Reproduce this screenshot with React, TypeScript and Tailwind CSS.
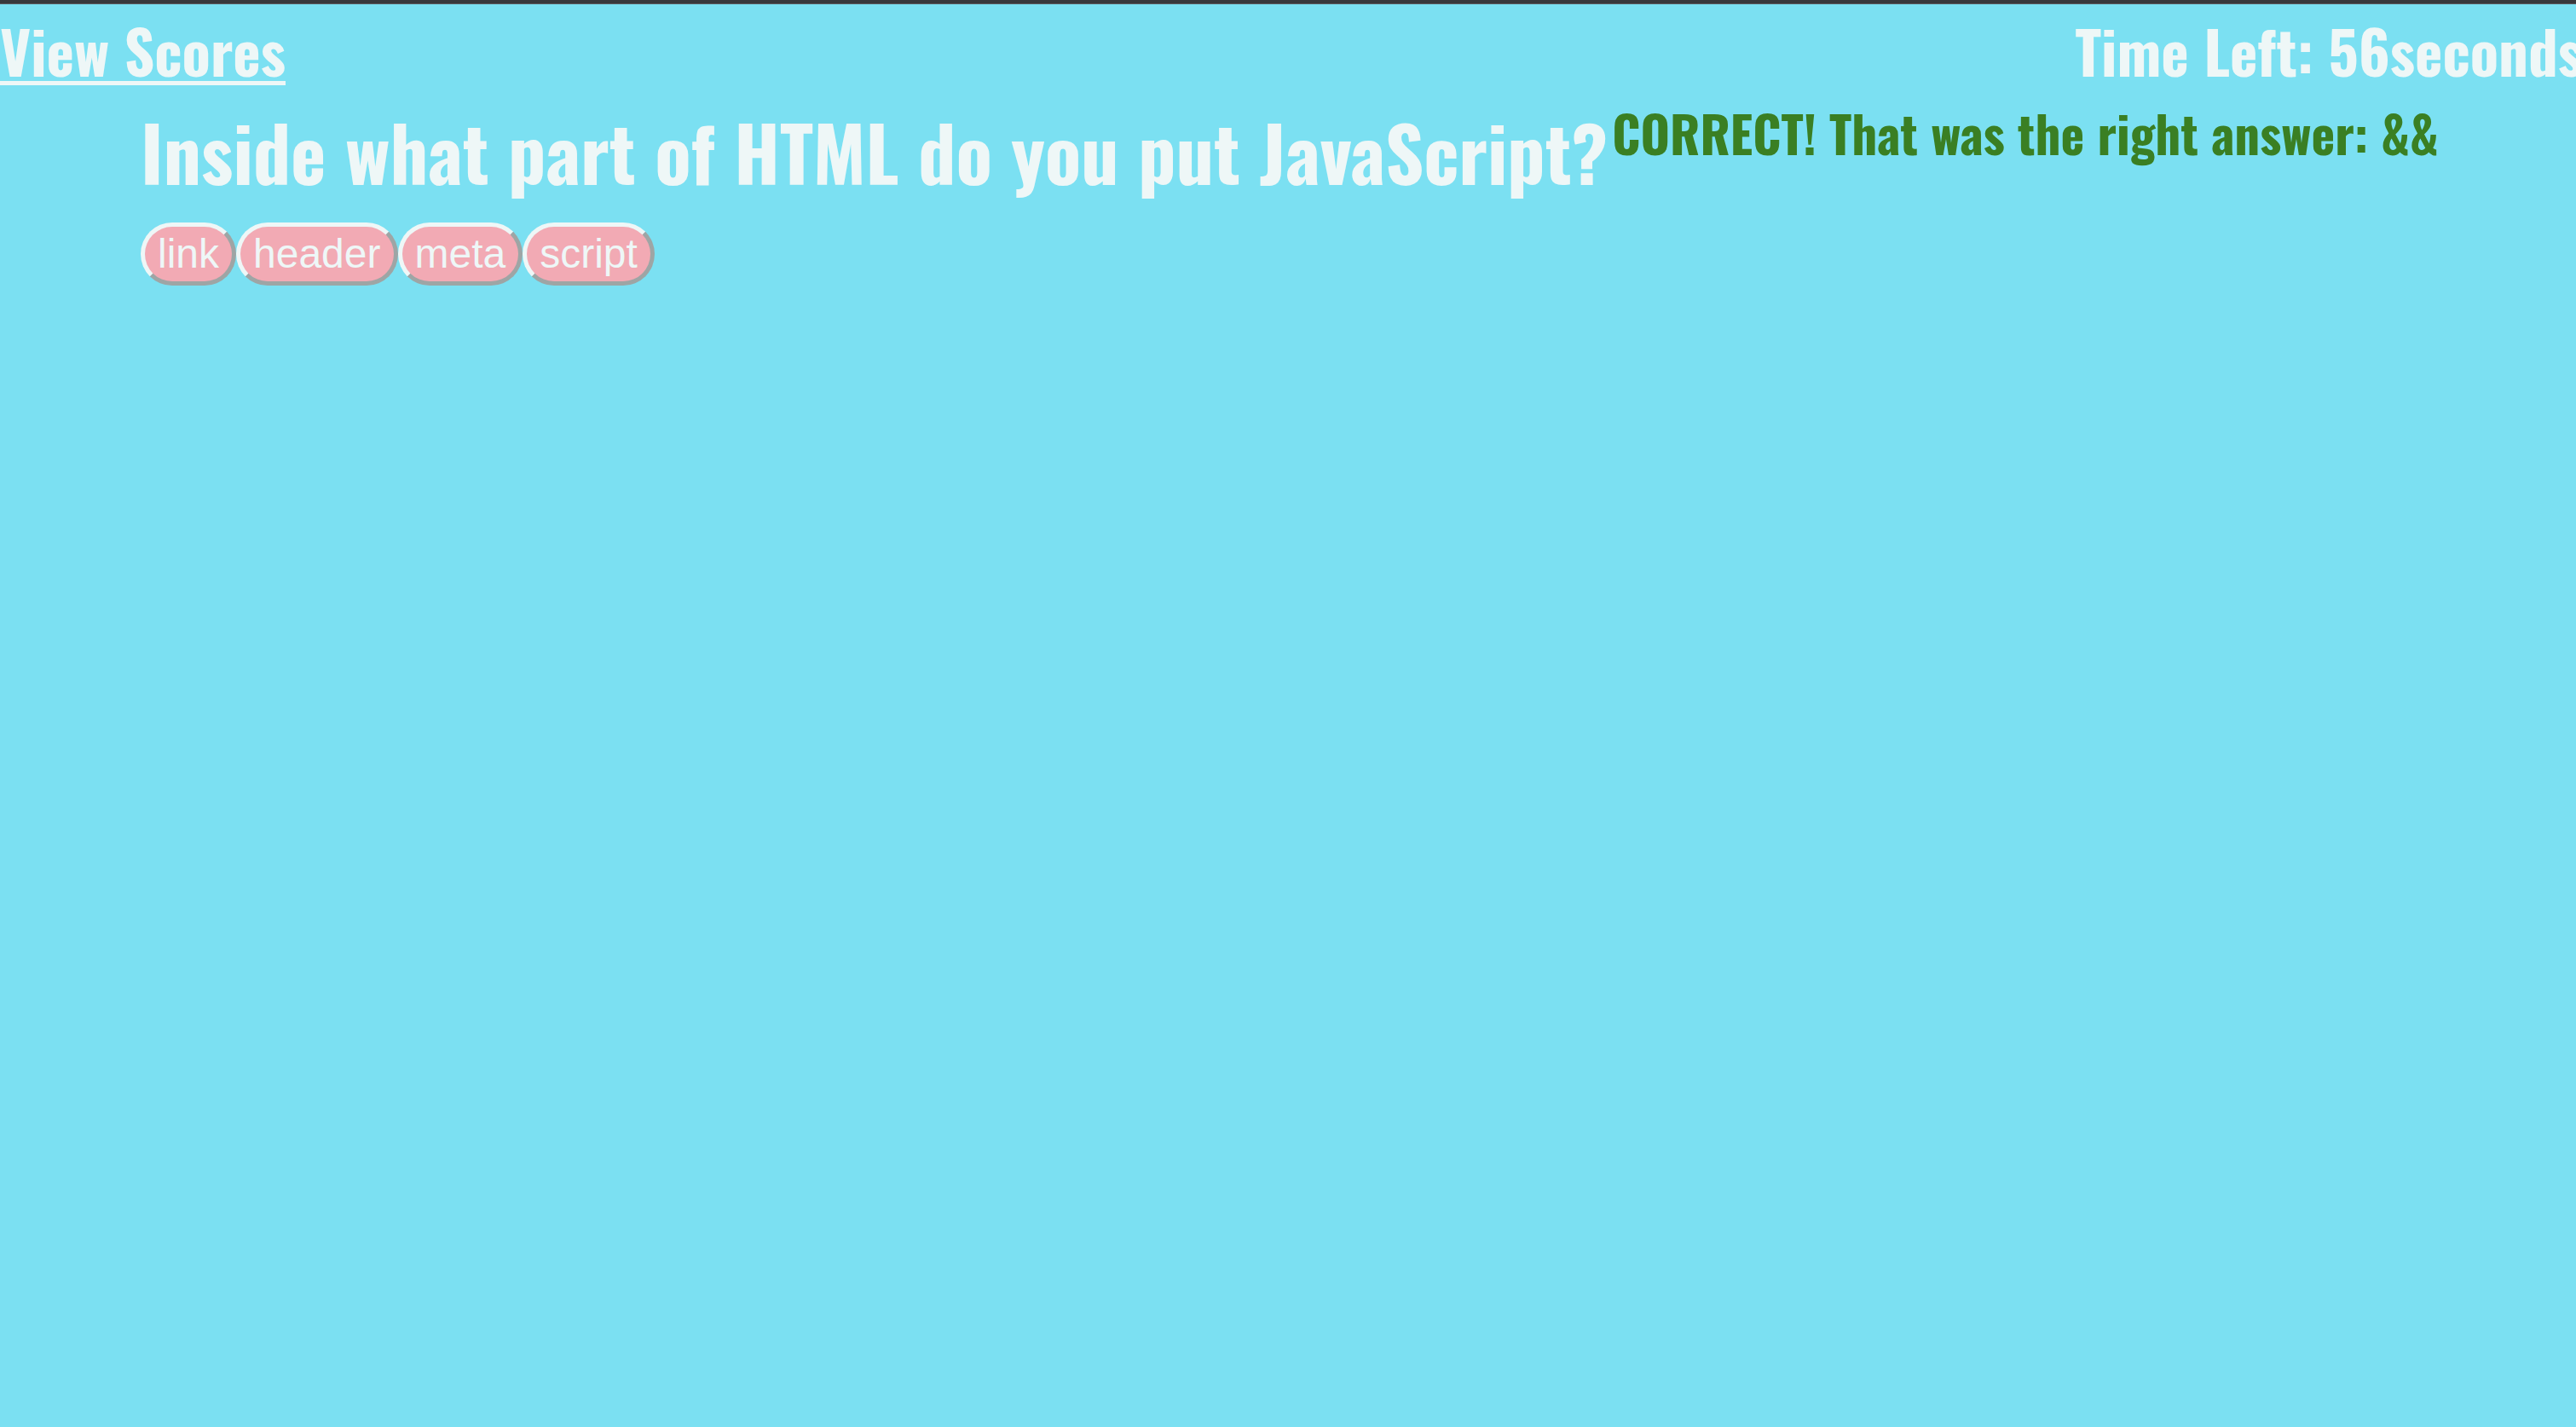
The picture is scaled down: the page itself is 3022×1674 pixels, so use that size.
const choices = ['link', 'header', 'meta', 'script'];

export default function App() {
  return (
    <div className="min-h-screen bg-[#7be0f2] font-['Oswald',sans-serif] font-bold text-[#eef7f7]">
      <div className="h-[4px] bg-[#38383c]"></div>
      <div className="h-[1px] bg-[#5a5a5e]"></div>

      <header className="flex items-start justify-between overflow-hidden">
        <a href="#" className="text-[69px] leading-[108px] underline decoration-5 underline-offset-[5px]">
          View Scores
        </a>
        <p className="shrink-0 whitespace-nowrap text-[69px] leading-[108px] mr-[-8px]">
          Time Left: 56seconds
        </p>
      </header>

      <main className="flex items-start pl-[165px]">
        <div>
          <h1 className="text-[88px] leading-[128px]">Inside what part of HTML do you put JavaScript?</h1>
          <div className="mt-[20px] flex">
            {choices.map((c) => (
              <button
                key={c}
                className="h-[74px] rounded-full border-[5px] border-t-[#eef7f7] border-l-[#eef7f7] border-b-[#9ea5a5] border-r-[#9ea5a5] bg-[#f2aab4] px-[15px] font-['Liberation_Sans',Arial,sans-serif] text-[48px] font-normal leading-none text-[#eef7f7]"
              >
                {c}
              </button>
            ))}
          </div>
        </div>
        <p className="ml-[5px] text-[59px] leading-[85px] text-[#3a7f23]">CORRECT! That was the right answer: &amp;&amp;</p>
      </main>
    </div>
  );
}
